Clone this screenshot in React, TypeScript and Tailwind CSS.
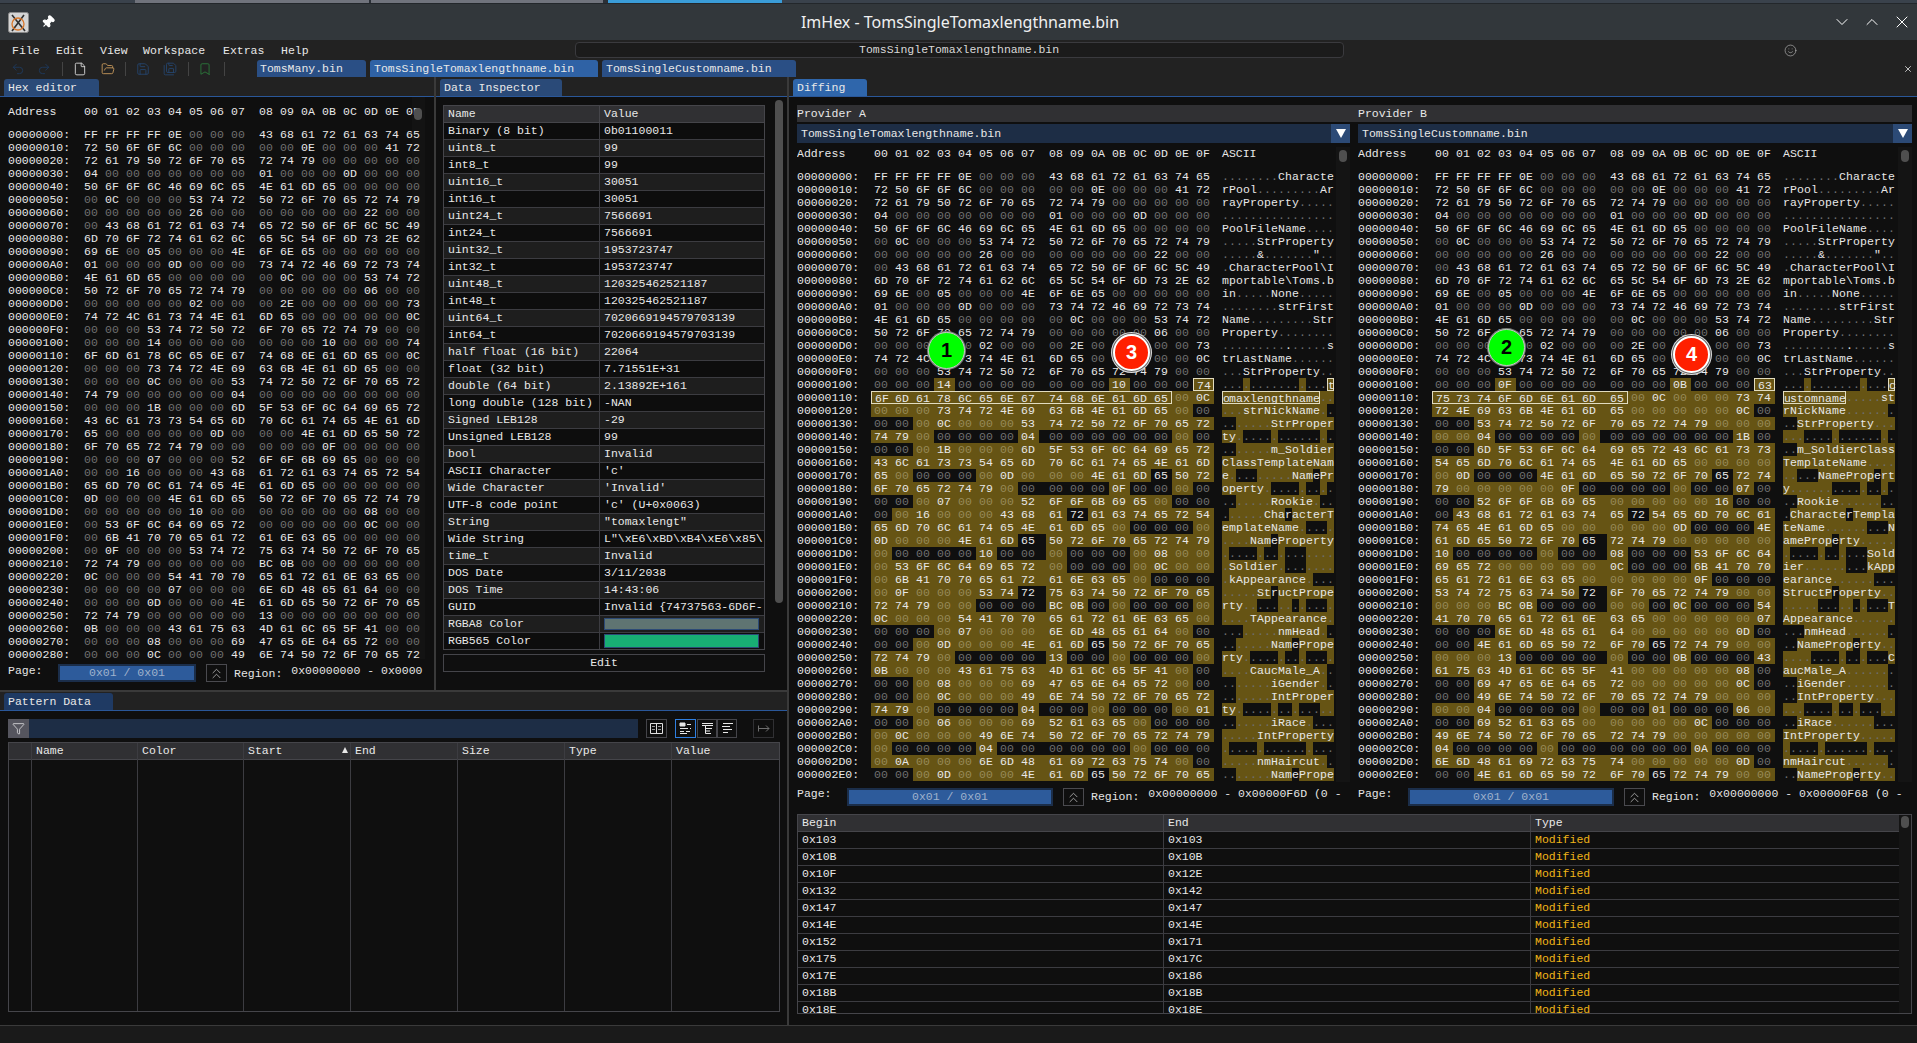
import React from 'react';
import clsx from 'clsx';
import {
  ChevronDown,
  ChevronUp,
  ChevronsUp,
  File,
  FolderOpen,
  Bookmark,
  Filter,
  Pin,
  Redo2,
  Save,
  SaveAll,
  Smile,
  Undo2,
  X,
} from 'lucide-react';

// raw file contents of provider A, provider B is computed from it below
const HEX_A = `
FF FF FF FF 0E 00 00 00 43 68 61 72 61 63 74 65
72 50 6F 6F 6C 00 00 00 00 00 0E 00 00 00 41 72
72 61 79 50 72 6F 70 65 72 74 79 00 00 00 00 00
04 00 00 00 00 00 00 00 01 00 00 00 0D 00 00 00
50 6F 6F 6C 46 69 6C 65 4E 61 6D 65 00 00 00 00
00 0C 00 00 00 53 74 72 50 72 6F 70 65 72 74 79
00 00 00 00 00 26 00 00 00 00 00 00 00 22 00 00
00 43 68 61 72 61 63 74 65 72 50 6F 6F 6C 5C 49
6D 70 6F 72 74 61 62 6C 65 5C 54 6F 6D 73 2E 62
69 6E 00 05 00 00 00 4E 6F 6E 65 00 00 00 00 00
01 00 00 00 0D 00 00 00 73 74 72 46 69 72 73 74
4E 61 6D 65 00 00 00 00 00 0C 00 00 00 53 74 72
50 72 6F 70 65 72 74 79 00 00 00 00 00 06 00 00
00 00 00 00 00 02 00 00 00 2E 00 00 00 00 00 73
74 72 4C 61 73 74 4E 61 6D 65 00 00 00 00 00 0C
00 00 00 53 74 72 50 72 6F 70 65 72 74 79 00 00
00 00 00 14 00 00 00 00 00 00 00 10 00 00 00 74
6F 6D 61 78 6C 65 6E 67 74 68 6E 61 6D 65 00 0C
00 00 00 73 74 72 4E 69 63 6B 4E 61 6D 65 00 00
00 00 00 0C 00 00 00 53 74 72 50 72 6F 70 65 72
74 79 00 00 00 00 00 04 00 00 00 00 00 00 00 00
00 00 00 1B 00 00 00 6D 5F 53 6F 6C 64 69 65 72
43 6C 61 73 73 54 65 6D 70 6C 61 74 65 4E 61 6D
65 00 00 00 00 00 0D 00 00 00 4E 61 6D 65 50 72
6F 70 65 72 74 79 00 00 00 00 00 0F 00 00 00 00
00 00 00 07 00 00 00 52 6F 6F 6B 69 65 00 00 00
00 00 16 00 00 00 43 68 61 72 61 63 74 65 72 54
65 6D 70 6C 61 74 65 4E 61 6D 65 00 00 00 00 00
0D 00 00 00 4E 61 6D 65 50 72 6F 70 65 72 74 79
00 00 00 00 00 10 00 00 00 00 00 00 00 08 00 00
00 53 6F 6C 64 69 65 72 00 00 00 00 00 0C 00 00
00 6B 41 70 70 65 61 72 61 6E 63 65 00 00 00 00
00 0F 00 00 00 53 74 72 75 63 74 50 72 6F 70 65
72 74 79 00 00 00 00 00 BC 0B 00 00 00 00 00 00
0C 00 00 00 54 41 70 70 65 61 72 61 6E 63 65 00
00 00 00 00 07 00 00 00 6E 6D 48 65 61 64 00 00
00 00 00 0D 00 00 00 4E 61 6D 65 50 72 6F 70 65
72 74 79 00 00 00 00 00 13 00 00 00 00 00 00 00
0B 00 00 00 43 61 75 63 4D 61 6C 65 5F 41 00 00
00 00 00 08 00 00 00 69 47 65 6E 64 65 72 00 00
00 00 00 0C 00 00 00 49 6E 74 50 72 6F 70 65 72
74 79 00 00 00 00 00 04 00 00 00 00 00 00 00 01
00 00 00 06 00 00 00 69 52 61 63 65 00 00 00 00
00 0C 00 00 00 49 6E 74 50 72 6F 70 65 72 74 79
00 00 00 00 00 04 00 00 00 00 00 00 00 00 00 00
00 0A 00 00 00 6E 6D 48 61 69 72 63 75 74 00 00
00 00 00 0D 00 00 00 4E 61 6D 65 50 72 6F 70 65
72 74 79 00 00 00 00 00 00 00 00 00 00 00 00 00`;

const bytesA = HEX_A.trim()
  .split(/\s+/)
  .map((h) => parseInt(h, 16));

// B has a shorter name string, so everything after it sits 5 bytes earlier
const bytesB = [
  ...bytesA.slice(0, 0x103),
  0x0f,
  ...bytesA.slice(0x104, 0x10b),
  0x0b,
  ...bytesA.slice(0x10c, 0x10f),
  0x63,
  0x75, 0x73, 0x74, 0x6f, 0x6d, 0x6e, 0x61, 0x6d, 0x65,
  ...bytesA.slice(0x119 + 5),
];

const HEX_HEADER = ['00', '01', '02', '03', '04', '05', '06', '07', '08', '09', '0A', '0B', '0C', '0D', '0E', '0F'];

const hex2 = (b: number) => b.toString(16).toUpperCase().padStart(2, '0');
const addr = (a: number) => a.toString(16).toUpperCase().padStart(8, '0') + ':';
const ascii = (b: number) => (b >= 0x20 && b < 0x7f ? String.fromCharCode(b) : '.');

// classes for a cell inside the outlined selection
function selClasses(a: number, selEnd: number, isFirstOfRow: boolean, isLastOfRow: boolean) {
  if (a === 0x10f) return 'bg-[#5c5030] border border-[#e2dcc0]';
  if (a < 0x110 || a > selEnd) return '';
  return clsx(
    'bg-[#5c5030] border-y border-[#e2dcc0]',
    (isFirstOfRow || a === 0x110) && 'border-l',
    (isLastOfRow || a === selEnd) && 'border-r',
  );
}

interface RowProps {
  start: number;
  data: number[];
  other?: number[];
  selEnd?: number;
}

const HexCells: React.FC<RowProps> = ({ start, data, other, selEnd = -1 }) => (
  <>
    {Array.from({ length: 16 }, (_, i) => {
      const a = start + i;
      const b = data[a];
      const diff = other ? other[a] !== b : false;
      const nextDiff = other ? other[a + 1] !== data[a + 1] : false;
      const sel = selEnd > 0 ? selClasses(a, selEnd, i === 0, i === 15) : '';
      return (
        <React.Fragment key={i}>
          <div
            className={clsx(
              'w-[21px] h-[13px] pl-[3px] box-border shrink-0',
              b === 0 ? 'text-[#6f6f6f]' : 'text-[#e8e8e8]',
              diff && 'bg-[#665414]',
              b === 0 && diff && 'text-[#968a58]',
              sel,
            )}
          >
            {hex2(b)}
          </div>
          {i === 7 && (
            <div
              className={clsx(
                'w-[7px] h-[13px] box-border shrink-0',
                diff && nextDiff && 'bg-[#665414]',
                selEnd > 0 && a >= 0x110 && a < selEnd && 'bg-[#5c5030] border-y border-[#e2dcc0]',
              )}
            />
          )}
        </React.Fragment>
      );
    })}
  </>
);

const AsciiCells: React.FC<RowProps> = ({ start, data, other, selEnd = -1 }) => (
  <>
    {Array.from({ length: 16 }, (_, i) => {
      const a = start + i;
      const b = data[a];
      const printable = b >= 0x20 && b < 0x7f;
      return (
        <div
          key={i}
          className={clsx(
            'w-[7px] h-[13px] box-border shrink-0 text-center',
            printable ? 'text-[#e8e8e8]' : 'text-[#6f6f6f]',
            other && other[a] !== b && 'bg-[#665414]',
            selEnd > 0 && selClasses(a, selEnd, i === 0, i === 15),
          )}
        >
          {ascii(b)}
        </div>
      );
    })}
  </>
);

const DockHeader: React.FC<{ title: string; tabClass: string; widthClass: string; short?: boolean }> = ({
  title,
  tabClass,
  widthClass,
  short,
}) => (
  <div className={clsx('shrink-0 bg-[#222222] border-b border-[#2a5799] flex items-end pl-1', short ? 'h-[19px]' : 'h-[20px]')}>
    <div className={clsx('h-[17px] leading-[18px] rounded-t-[3px] pl-[4px]', tabClass, widthClass)}>{title}</div>
  </div>
);

const PageBar: React.FC<{ region: string; wide?: boolean }> = ({ region, wide }) => (
  <div className="flex items-start h-[18px] shrink-0 text-[#e4e4e4]">
    <span className={clsx('w-[50px]', wide && 'mt-[-1px]')}>Page:</span>
    <div className={clsx('h-[18px] bg-[#1b2e4a] p-[2px] shrink-0', wide ? 'w-[206px]' : 'w-[138px]')}>
      <div className="h-full bg-[#2d5b9b] text-center leading-[14px] text-[#9fb2cc]">0x01 / 0x01</div>
    </div>
    <div className="ml-[10px] w-[21px] h-[18px] shrink-0 border border-[#4a4a4f] flex items-center justify-center">
      <ChevronsUp size={17} strokeWidth={1} className="text-[#d0d0d0]" />
    </div>
    <span className={clsx('ml-[7px]', wide ? 'pt-[2px]' : 'pt-[3px]')}>Region:</span>
    <span className={clsx('ml-[9px] whitespace-pre', wide && 'mt-[-1px]')}>{region}</span>
  </div>
);

const INSPECTOR: [string, string][] = [
  ['Binary (8 bit)', '0b01100011'],
  ['uint8_t', '99'],
  ['int8_t', '99'],
  ['uint16_t', '30051'],
  ['int16_t', '30051'],
  ['uint24_t', '7566691'],
  ['int24_t', '7566691'],
  ['uint32_t', '1953723747'],
  ['int32_t', '1953723747'],
  ['uint48_t', '120325462521187'],
  ['int48_t', '120325462521187'],
  ['uint64_t', '7020669194579703139'],
  ['int64_t', '7020669194579703139'],
  ['half float (16 bit)', '22064'],
  ['float (32 bit)', '7.71551E+31'],
  ['double (64 bit)', '2.13892E+161'],
  ['long double (128 bit)', '-NAN'],
  ['Signed LEB128', '-29'],
  ['Unsigned LEB128', '99'],
  ['bool', 'Invalid'],
  ['ASCII Character', "'c'"],
  ['Wide Character', "'Invalid'"],
  ['UTF-8 code point', "'c' (U+0x0063)"],
  ['String', '"tomaxlengt"'],
  ['Wide String', 'L"\\xE6\\xBD\\xB4\\xE6\\x85\\'],
  ['time_t', 'Invalid'],
  ['DOS Date', '3/11/2038'],
  ['DOS Time', '14:43:06'],
  ['GUID', 'Invalid {74737563-6D6F-'],
];

const DIFFS: [string, string][] = [
  ['0x103', '0x103'],
  ['0x10B', '0x10B'],
  ['0x10F', '0x12E'],
  ['0x132', '0x142'],
  ['0x147', '0x147'],
  ['0x14E', '0x14E'],
  ['0x152', '0x171'],
  ['0x175', '0x17C'],
  ['0x17E', '0x186'],
  ['0x18B', '0x18B'],
  ['0x18E', '0x18E'],
];

const PATTERN_COLS: [string, string][] = [
  ['', 'w-[23px]'],
  ['Name', 'w-[106px]'],
  ['Color', 'w-[106px]'],
  ['Start', 'w-[107px]'],
  ['End', 'w-[107px]'],
  ['Size', 'w-[107px]'],
  ['Type', 'w-[107px]'],
  ['Value', 'flex-1'],
];

const Badge: React.FC<{ n: number; pos: string; red?: boolean }> = ({ n, pos, red }) => (
  <div
    className={clsx(
      'absolute w-[37px] h-[37px] rounded-full flex items-center justify-center text-[20px] font-bold font-["Liberation_Sans",sans-serif]',
      pos,
      red
        ? 'bg-[#ff2000] text-white border-[2px] border-white shadow-[0_0_0_1px_#666,0_0_0_2px_#ddd]'
        : 'bg-[#00ff00] text-black border border-[#c8c8c8] shadow-[0_0_0_1px_#777]',
    )}
  >
    {n}
  </div>
);

const Provider: React.FC<{ data: number[]; other: number[]; selEnd: number; name: string; region: string; className: string }> = ({
  data,
  other,
  selEnd,
  name,
  region,
  className,
}) => (
  <div className={clsx('flex flex-col shrink-0', className)}>
    <div className="h-[19px] bg-[#1d2d45] flex items-center justify-between pl-[4px] text-[#e8e8e8]">
      <span>{name}</span>
      <span className="w-[19px] h-[19px] bg-[#2c4a76] flex items-center justify-center">
        <span className="w-0 h-0 border-x-[5px] border-x-transparent border-t-[9px] border-t-white" />
      </span>
    </div>
    <div className="flex mt-[4px] h-[635px] overflow-hidden">
      <div className="flex-1 min-w-0">
        <div className="flex h-[13px] text-[#e8e8e8]">
          <div className="w-[74px] shrink-0">Address</div>
          {HEX_HEADER.map((h, i) => (
            <div key={h} className={clsx('w-[21px] pl-[3px] shrink-0', i === 7 && 'mr-[7px]')}>
              {h}
            </div>
          ))}
          <div className="ml-[8px]">ASCII</div>
        </div>
        <div className="h-[10px]" />
        {Array.from({ length: 47 }, (_, r) => (
          <div key={r} className="flex h-[13px]">
            <div className="w-[74px] shrink-0 text-[#e8e8e8]">{addr(r * 16)}</div>
            <HexCells start={r * 16} data={data} other={other} selEnd={selEnd} />
            <div className="w-[8px] shrink-0" />
            <AsciiCells start={r * 16} data={data} other={other} selEnd={selEnd} />
          </div>
        ))}
      </div>
      <div className="w-[14px] shrink-0 bg-[#141414] flex justify-center">
        <div className="w-[8px] h-[12px] mt-[3px] rounded-full bg-[#4f4f4f]" />
      </div>
    </div>
    <div className="mt-[6px]">
      <PageBar region={region} wide />
    </div>
  </div>
);

export default function App() {
  return (
    <div className="relative w-[1917px] h-[1043px] overflow-hidden bg-[#0f0f0f] flex flex-col text-[11.5px] leading-[13px] text-[#e8e8e8] font-['Liberation_Mono',monospace]">
      {/* strip of the desktop taskbar above the window */}
      <div className="h-[4px] shrink-0 flex bg-[#2b3037] border-b border-[#23272b]">
        <div className="w-[135px] bg-[#3a424c]" />
        <div className="w-[234px] bg-[#70737c]" />
        <div className="w-[2px]" />
        <div className="w-[232px] bg-[#70737c]" />
        <div className="w-[5px]" />
        <div className="w-[174px] bg-[#3a9cd8]" />
        <div className="flex-1 bg-[#3a424c]" />
      </div>

      {/* window title bar */}
      <div className="h-[36px] shrink-0 bg-[#32373b] flex items-center pl-[8px] relative">
        <svg width="21" height="21" viewBox="0 0 21 21" className="shrink-0">
          <rect x="0.5" y="0.5" width="20" height="20" rx="2" fill="#d4d4d4" stroke="#8a8a8a" />
          <path d="M4 3 L17 19 M16 3 L4 19" stroke="#303030" strokeWidth="1.6" fill="none" />
          <circle cx="10" cy="12" r="6" fill="none" stroke="#d9772b" strokeWidth="1.3" />
        </svg>
        <Pin size={14} fill="white" className="ml-[12px] rotate-45 text-white" />
        <div className="flex-1 text-center pl-[33px] text-[16px] text-[#eff0f1] font-['Noto_Sans',sans-serif]">
          ImHex - TomsSingleTomaxlengthname.bin
        </div>
        <ChevronDown size={20} strokeWidth={1.2} className="mr-[10px] text-white" />
        <ChevronUp size={20} strokeWidth={1.2} className="mr-[10px] text-white" />
        <X size={20} strokeWidth={1.2} className="mr-[5px] text-white" />
      </div>

      {/* menu bar */}
      <div className="h-[20px] shrink-0 bg-[#222222] flex items-center pl-[12px] relative">
        <span className="w-[44px]">File</span>
        <span className="w-[44px]">Edit</span>
        <span className="w-[43px]">View</span>
        <span className="w-[80px]">Workspace</span>
        <span className="w-[58px]">Extras</span>
        <span>Help</span>
        <div className="ml-[266px] w-[769px] h-[16px] rounded-[4px] bg-[#1b1b1b] border border-[#3a3a3e] text-center leading-[14px] text-[#d8d8d8]">
          TomsSingleTomaxlengthname.bin
        </div>
        <Smile size={13} strokeWidth={1.2} className="ml-[440px] text-[#b8b8b8]" />
      </div>

      {/* tool bar and open providers */}
      <div className="h-[17px] shrink-0 bg-[#222222] flex items-center relative">
        <Undo2 size={14} strokeWidth={1.5} className="ml-[11px] text-[#1e3a5f]" />
        <Redo2 size={14} strokeWidth={1.5} className="ml-[12px] text-[#1e3a5f]" />
        <div className="ml-[11px] w-px h-[14px] bg-[#444444]" />
        <File size={14} strokeWidth={1.5} className="ml-[10px] text-[#dddddd]" />
        <FolderOpen size={14} strokeWidth={1.5} className="ml-[14px] text-[#c99a5b]" />
        <div className="ml-[10px] w-px h-[14px] bg-[#444444]" />
        <Save size={14} strokeWidth={1.5} className="ml-[10px] text-[#25466f]" />
        <SaveAll size={14} strokeWidth={1.5} className="ml-[13px] text-[#25466f]" />
        <div className="ml-[11px] w-px h-[14px] bg-[#444444]" />
        <Bookmark size={14} strokeWidth={1.5} className="ml-[9px] text-[#2b7a3c]" />
        <div className="ml-[12px] w-px h-[14px] bg-[#444444]" />
        <div className="self-end ml-[32px] w-[109px] h-[17px] leading-[17px] bg-[#2a4f85] rounded-t-[3px] pl-[3px]">TomsMany.bin</div>
        <div className="self-end ml-[4px] w-[228px] h-[17px] leading-[17px] bg-[#2f62a5] rounded-t-[3px] pl-[4px]">TomsSingleTomaxlengthname.bin</div>
        <div className="self-end ml-[4px] w-[194px] h-[17px] leading-[17px] bg-[#2a4f85] rounded-t-[3px] pl-[4px]">TomsSingleCustomname.bin</div>
        <X size={10} className="ml-auto mr-[4px] text-[#e0e0e0]" />
      </div>

      {/* docked windows */}
      <div className="h-[948px] shrink-0 flex">
        <div className="w-[787px] shrink-0 flex flex-col">
          <div className="h-[613px] shrink-0 flex">
            {/* hex editor */}
            <div className="w-[434px] shrink-0 flex flex-col">
              <DockHeader title="Hex editor" tabClass="bg-[#2a4a78]" widthClass="w-[95px]" />
              <div className="relative pl-[8px] pt-[8px] h-[562px] overflow-hidden">
                <div className="absolute left-[412px] top-0 bottom-0 w-[13px] bg-[#131313]" />
                <div className="relative w-[418px]">
                  <div className="flex h-[13px]">
                    <div className="w-[73px] shrink-0">Address</div>
                    {HEX_HEADER.map((h, i) => (
                      <div key={h} className={clsx('w-[21px] pl-[3px] shrink-0', i === 7 && 'mr-[7px]')}>
                        {h}
                      </div>
                    ))}
                  </div>
                  <div className="h-[10px]" />
                  {Array.from({ length: 41 }, (_, r) => (
                    <div key={r} className="flex h-[13px]">
                      <div className="w-[73px] shrink-0">{addr(r * 16)}</div>
                      <HexCells start={r * 16} data={bytesA} />
                    </div>
                  ))}
                </div>
                <div className="absolute left-[414px] top-[11px] w-[8px] h-[12px] rounded-full bg-[#4f4f4f]" />
              </div>
              <div className="pl-[8px] mt-[5px]">
                <PageBar region="0x00000000 - 0x0000" />
              </div>
            </div>

            <div className="w-[2px] shrink-0 bg-[#3a3a3a]" />

            {/* data inspector */}
            <div className="w-[351px] shrink-0 flex flex-col">
              <DockHeader title="Data Inspector" tabClass="bg-[#2a4a78]" widthClass="w-[122px]" />
              <div className="flex pl-[7px] pt-[8px]">
                <div className="w-[322px] shrink-0">
                  <div className="border border-[#45454a]">
                    <div className="flex h-[17px] bg-[#303033] border-b border-[#45454a] leading-[16px]">
                      <div className="w-[156px] shrink-0 pl-[4px] border-r border-[#45454a]">Name</div>
                      <div className="pl-[4px]">Value</div>
                    </div>
                    {INSPECTOR.map(([k, v], i) => (
                      <div
                        key={k}
                        className={clsx(
                          'flex h-[17px] border-b border-[#3c3c41] leading-[16px]',
                          i % 2 === 0 ? 'bg-[#0d0d0d]' : 'bg-[#1e1e1e]',
                        )}
                      >
                        <div className="w-[156px] shrink-0 pl-[4px] border-r border-[#3c3c41] whitespace-pre">{k}</div>
                        <div className="pl-[4px] whitespace-pre overflow-hidden">{v}</div>
                      </div>
                    ))}
                    <div className="flex h-[17px] border-b border-[#3c3c41] leading-[16px] bg-[#1e1e1e]">
                      <div className="w-[156px] shrink-0 pl-[4px] border-r border-[#3c3c41]">RGBA8 Color</div>
                      <div className="flex-1 p-[2px] pl-[4px] pr-[5px]">
                        <div className="h-full bg-[#5f7472] border border-[#2c4a76]" />
                      </div>
                    </div>
                    <div className="flex h-[16px] leading-[16px] bg-[#0d0d0d]">
                      <div className="w-[156px] shrink-0 pl-[4px] border-r border-[#3c3c41]">RGB565 Color</div>
                      <div className="flex-1 p-[1px] pl-[4px] pr-[5px]">
                        <div className="h-full bg-[#18ae74] border border-[#2c4a76]" />
                      </div>
                    </div>
                  </div>
                  <div className="mt-[4px] h-[18px] border border-[#45454a] text-center leading-[16px]">Edit</div>
                </div>
                <div className="ml-[10px] w-[8px] h-[503px] mt-[-5px] rounded-full bg-[#4f4f4f]" />
              </div>
            </div>
          </div>

          <div className="h-[2px] shrink-0 bg-[#3a3a3a]" />

          {/* pattern data */}
          <div className="flex-1 flex flex-col min-h-0">
            <DockHeader title="Pattern Data" tabClass="bg-[#1f3a63]" widthClass="w-[109px]" short />
            <div className="pl-[8px] pr-[7px] pt-[8px] flex-1 flex flex-col">
              <div className="flex h-[19px] shrink-0">
                <div className="w-[21px] bg-[#55555e] flex items-center justify-center">
                  <Filter size={13} strokeWidth={1.2} className="text-white" />
                </div>
                <div className="w-[609px] bg-[#1d2d45]" />
                <div className="ml-[8px] w-[21px] border border-[#45454a] flex items-center justify-center">
                  <svg width="13" height="13" viewBox="0 0 13 13" fill="none" stroke="#e0e0e0">
                    <path d="M0.5 1.5 H12.5 V11.5 H0.5 Z M6.5 1.5 V11.5" />
                    <path d="M2 4.5 H5 M2 7.5 H5 M8 4.5 H11 M8 7.5 H11" stroke="#9a9a9a" />
                  </svg>
                </div>
                <div className="ml-[8px] w-[21px] border border-[#2f7fe0] flex items-center justify-center">
                  <svg width="13" height="13" viewBox="0 0 13 13" fill="none" stroke="#e8e8e8">
                    <path d="M1 1 H6 V4 H1 Z" fill="#e8e8e8" />
                    <path d="M8 2.5 H12 M1 6.5 H9 M11 6.5 H12 M1 9.5 H5 M7 9.5 H11 M1 11.5 H8" />
                  </svg>
                </div>
                <div className="ml-[1px] w-[20px] border border-[#45454a] flex items-center justify-center">
                  <svg width="13" height="13" viewBox="0 0 13 13" fill="none" stroke="#e8e8e8">
                    <path d="M1 1.5 H12 M1 3.5 H12 M4.5 3.5 V11.5 M4.5 6.5 H11 M4.5 9 H9 M4.5 11.5 H10" />
                  </svg>
                </div>
                <div className="w-[20px] border border-[#45454a] flex items-center justify-center">
                  <svg width="13" height="13" viewBox="0 0 13 13" fill="none" stroke="#e8e8e8">
                    <path d="M2 1.5 H12 M1 4.5 H9 M2 7.5 H11 M2 10.5 H7" />
                  </svg>
                </div>
                <div className="ml-[16px] w-[21px] border border-[#303033] flex items-center justify-center">
                  <svg width="13" height="13" viewBox="0 0 13 13" fill="none" stroke="#6e6e6e">
                    <path d="M1.5 3.5 V9.5 M1.5 6.5 H12 M9 3.5 L12 6.5 L9 9.5" />
                  </svg>
                </div>
              </div>
              <div className="mt-[4px] h-[270px] shrink-0 border border-[#45454a] flex">
                {PATTERN_COLS.map(([c, w]) => (
                  <div key={c || 'idx'} className={clsx('flex flex-col border-r border-[#3c3c41] last:border-r-0 relative', w)}>
                    <div className="h-[17px] bg-[#303033] border-b border-[#45454a] pl-[4px] leading-[16px]">{c}</div>
                    {c === 'Start' && (
                      <span className="absolute right-[2px] top-[4px] w-0 h-0 border-x-[3px] border-x-transparent border-b-[6px] border-b-[#e8e8e8]" />
                    )}
                  </div>
                ))}
              </div>
            </div>
          </div>
        </div>

        <div className="w-[2px] shrink-0 bg-[#3a3a3a]" />

        {/* diffing view */}
        <div className="flex-1 min-w-0 flex flex-col">
          <DockHeader title="Diffing" tabClass="bg-[#2f66ab]" widthClass="w-[74px]" />
          <div className="pl-[8px] pr-[5px] pt-[8px] flex-1 flex flex-col">
            <div className="h-[17px] shrink-0 bg-[#303033] flex leading-[17px]">
              <div className="w-[561px] shrink-0">Provider A</div>
              <div>Provider B</div>
            </div>
            <div className="flex mt-[2px]">
              <Provider
                data={bytesA}
                other={bytesB}
                selEnd={0x11d}
                name="TomsSingleTomaxlengthname.bin"
                region="0x00000000 - 0x00000F6D (0 -"
                className="w-[553px] mr-[8px]"
              />
              <Provider
                data={bytesB}
                other={bytesA}
                selEnd={0x118}
                name="TomsSingleCustomname.bin"
                region="0x00000000 - 0x00000F68 (0 -"
                className="w-[554px]"
              />
            </div>
            <div className="mt-[8px] h-[200px] shrink-0 border border-[#45454a] flex overflow-hidden">
              <div className="flex-1 min-w-0">
                <div className="flex h-[17px] bg-[#303033] border-b border-[#45454a] leading-[16px]">
                  <div className="w-[366px] pl-[4px] border-r border-[#45454a]">Begin</div>
                  <div className="w-[367px] pl-[4px] border-r border-[#45454a]">End</div>
                  <div className="pl-[4px]">Type</div>
                </div>
                {DIFFS.map(([b, e]) => (
                  <div key={b} className="flex h-[17px] border-b border-[#3c3c41] leading-[16px]">
                    <div className="w-[366px] pl-[4px] border-r border-[#3c3c41]">{b}</div>
                    <div className="w-[367px] pl-[4px] border-r border-[#3c3c41]">{e}</div>
                    <div className="pl-[4px] text-[#f0b418]">Modified</div>
                  </div>
                ))}
              </div>
              <div className="w-[12px] shrink-0 bg-[#141414] flex justify-center">
                <div className="w-[8px] h-[12px] mt-[1px] rounded-full bg-[#4f4f4f]" />
              </div>
            </div>
          </div>
        </div>
      </div>

      {/* status bar */}
      <div className="flex-1 border-t border-[#3a3a3a] bg-[#1a1a1a]" />

      <Badge n={1} pos="left-[928px] top-[332px]" />
      <Badge n={2} pos="left-[1488px] top-[329px]" />
      <Badge n={3} pos="left-[1113px] top-[334px]" red />
      <Badge n={4} pos="left-[1673px] top-[336px]" red />
    </div>
  );
}
